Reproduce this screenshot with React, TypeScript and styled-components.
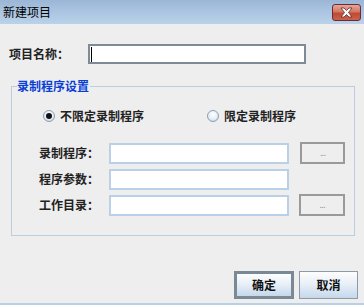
import React from 'react';
import styled, { createGlobalStyle } from 'styled-components';

const colors = {
    body: '#eeeeee',
    frame: '#b7d0e8',
    groupLine: '#b8cee3',
    inputLine: '#b9d0e6',
    blue: '#0a3fd6',
    text: '#222222',
};

const GlobalStyle = createGlobalStyle`
    html, body {
        margin: 0;
        padding: 0;
        background: ${colors.body};
    }
    body {
        font-family: "Noto Sans CJK SC", "Noto Sans", sans-serif;
        font-size: 12px;
        color: ${colors.text};
    }
`;

const Window = styled.div`
    width: 364px;
    height: 305px;
    box-sizing: border-box;
    background: ${colors.body};
    border-bottom: 2px solid ${colors.frame};
    display: flex;
    flex-direction: column;
`;

const TitleBar = styled.div`
    height: 24px;
    flex: none;
    display: flex;
    align-items: center;
    justify-content: space-between;
    padding: 0 3px 0 3px;
    background: linear-gradient(to bottom, #9bb6d6 0%, #abc5e1 50%, #bad2ea 100%);
`;

const Title = styled.span`
    font-size: 12px;
    line-height: 14px;
    color: #000;
`;

const CloseButton = styled.div`
    width: 29px;
    height: 17px;
    box-sizing: border-box;
    margin-top: 1px;
    border: 1px solid #6b2b36;
    border-radius: 3px;
    background: linear-gradient(to bottom, #e7a597 0%, #d27764 45%, #c04a33 55%, #c9624c 100%);
    display: flex;
    align-items: center;
    justify-content: center;
`;

const Body = styled.div`
    flex: 1;
    padding-top: 20px;
    display: flex;
    flex-direction: column;
`;

const NameRow = styled.div`
    display: flex;
    align-items: center;
    height: 20px;
    padding-left: 9px;
`;

const NameLabel = styled.span`
    width: 79px;
    font-weight: bold;
    line-height: 14px;
`;

const NameInput = styled.div`
    width: 218px;
    height: 20px;
    box-sizing: border-box;
    border: 2px solid #7e8a96;
    background: #fff;
    display: flex;
    align-items: center;
`;

const Caret = styled.span`
    width: 1px;
    height: 15px;
    margin-left: 1px;
    background: #000;
`;

const Group = styled.fieldset`
    margin: 15px 9px 0 11px;
    padding: 0 0 19px 5px;
    border: 1px solid ${colors.groupLine};
    min-width: 0;
`;

const Legend = styled.legend`
    padding: 0 1px 0 0;
    font-weight: bold;
    color: ${colors.blue};
    line-height: 14px;
`;

const RadioRow = styled.div`
    margin-top: 16px;
    height: 14px;
    padding-left: 26px;
    display: flex;
    align-items: center;
`;

const RadioItem = styled.label<{ $width?: number }>`
    display: flex;
    align-items: center;
    gap: 5px;
    width: ${(p) => (p.$width ? `${p.$width}px` : 'auto')};
    font-weight: bold;
    line-height: 14px;
`;

const RadioCircle = styled.span<{ $checked: boolean }>`
    width: 12px;
    height: 12px;
    box-sizing: border-box;
    border-radius: 50%;
    border: 1px solid #8d9db1;
    background: radial-gradient(circle at 50% 35%, #ffffff 0%, #e6eef7 55%, #b9cbe0 100%);
    display: flex;
    align-items: center;
    justify-content: center;

    &::after {
        content: '';
        display: ${(p) => (p.$checked ? 'block' : 'none')};
        width: 6px;
        height: 6px;
        border-radius: 50%;
        background: #111;
    }
`;

const Fields = styled.div`
    margin-top: 19px;
    padding-left: 22px;
    display: grid;
    grid-template-columns: 60px 180px 46px;
    column-gap: 10px;
    row-gap: 4px;
    align-items: center;
`;

const FieldLabel = styled.span`
    font-weight: bold;
    line-height: 14px;
    white-space: nowrap;
`;

const FieldInput = styled.div`
    height: 21px;
    box-sizing: border-box;
    border: 2px solid ${colors.inputLine};
    background: #fff;
`;

const BrowseButton = styled.div<{ $shift?: number }>`
    height: 22px;
    box-sizing: border-box;
    margin-left: ${(p) => p.$shift ?? 0}px;
    border: 2px solid #9a9a9a;
    background: ${colors.body};
    display: flex;
    align-items: center;
    justify-content: center;
    font-family: "DejaVu Sans", sans-serif;
    font-size: 9px;
    letter-spacing: -1px;
    color: #8b95a3;
`;

const Empty = styled.span`
    height: 22px;
`;

const Footer = styled.div`
    margin-top: 35px;
    padding-right: 6px;
    display: flex;
    justify-content: flex-end;
    gap: 5px;
`;

const DialogButton = styled.div<{ $focused?: boolean }>`
    width: ${(p) => (p.$focused ? 60 : 59)}px;
    height: 28px;
    box-sizing: border-box;
    border: ${(p) => (p.$focused ? '3px solid #7b8896' : '1px solid #8e9aa7')};
    background: linear-gradient(to bottom, #fdfdfe 0%, #e9f0f7 45%, #c5d8eb 100%);
    display: flex;
    align-items: center;
    justify-content: center;
    font-weight: bold;
    line-height: 14px;
    color: #111;
`;

const CloseIcon = () => (
    <svg width="15" height="11" viewBox="0 0 15 11">
        <path
            d="M2 1 L5 1 L7.5 3.5 L10 1 L13 1 L9.5 5.5 L13 10 L10 10 L7.5 7.5 L5 10 L2 10 L5.5 5.5 Z"
            fill="#ffffff"
            stroke="#5a2a30"
            strokeWidth="0.8"
            strokeLinejoin="round"
        />
    </svg>
);

export default function App() {
    return (
        <>
            <GlobalStyle />
            <Window>
                <TitleBar>
                    <Title>新建项目</Title>
                    <CloseButton>
                        <CloseIcon />
                    </CloseButton>
                </TitleBar>
                <Body>
                    <NameRow>
                        <NameLabel>项目名称：</NameLabel>
                        <NameInput>
                            <Caret />
                        </NameInput>
                    </NameRow>
                    <Group>
                        <Legend>录制程序设置</Legend>
                        <RadioRow>
                            <RadioItem $width={164}>
                                <RadioCircle $checked />
                                不限定录制程序
                            </RadioItem>
                            <RadioItem>
                                <RadioCircle $checked={false} />
                                限定录制程序
                            </RadioItem>
                        </RadioRow>
                        <Fields>
                            <FieldLabel>录制程序：</FieldLabel>
                            <FieldInput />
                            <BrowseButton $shift={1}>...</BrowseButton>
                            <FieldLabel>程序参数：</FieldLabel>
                            <FieldInput />
                            <Empty />
                            <FieldLabel>工作目录：</FieldLabel>
                            <FieldInput />
                            <BrowseButton>...</BrowseButton>
                        </Fields>
                    </Group>
                    <Footer>
                        <DialogButton $focused>确定</DialogButton>
                        <DialogButton>取消</DialogButton>
                    </Footer>
                </Body>
            </Window>
        </>
    );
}
